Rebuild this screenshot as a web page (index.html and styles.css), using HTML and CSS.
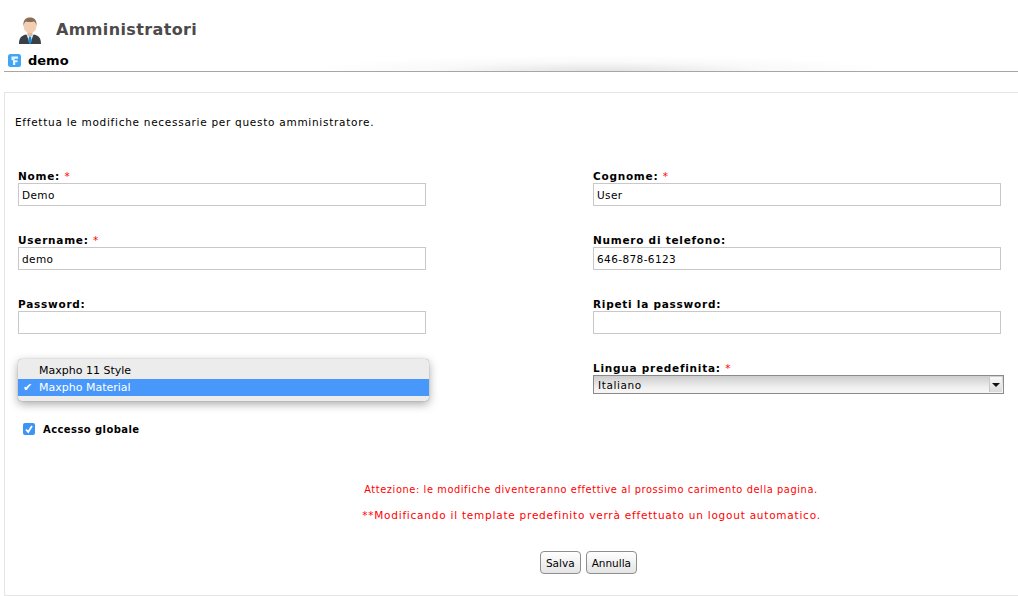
FILE: index.html
```html
<!DOCTYPE html>
<html lang="it">
<head>
<meta charset="utf-8">
<title>Amministratori</title>
<link rel="stylesheet" href="styles.css">
</head>
<body>
<header class="page-head">
  <svg class="admin-icon" width="24" height="27" viewBox="0 0 24 27">
    <path d="M1 27c0-6 2-8 7-9.500l4 2 4-2c5 1.500 7 3.500 7 9.500z" fill="#3b4047"/>
    <path d="M8.500 17.500h7L12 27z" fill="#eef2f5"/>
    <path d="M11 19.500h2l.8 5-1.800 2.500-1.800-2.500z" fill="#1c86d0"/>
    <rect x="9.500" y="13" width="5" height="6" fill="#e3b89a"/>
    <ellipse cx="12" cy="9" rx="6.500" ry="7.200" fill="#f1cdb2"/>
    <path d="M5.500 9C4.700 3 8 .5 12 .5s7.300 2.500 6.500 8.500c-.5-2.500-1.200-4-2.700-4.500-2.500.8-6 .8-7.600 0C6.700 5 6 6.500 5.500 9z" fill="#8a6d55"/>
  </svg>
  <h1 class="title">Amministratori</h1>
</header>
<div class="sub-head">
  <svg class="info-icon" width="13" height="13" viewBox="0 0 13 13">
    <rect width="13" height="13" rx="2.500" fill="#41a5f5"/>
    <path d="M3.500 2.500h6.500v2.200H6.500v1.600h3v2H7.200V11H5V6.300H3.500z" fill="#e8f5ff"/>
  </svg>
  <h2 class="record-name">demo</h2>
</div>

<main class="panel">
  <p class="intro">Effettua le modifiche necessarie per questo amministratore.</p>
  <form class="form-grid">
    <div class="field">
      <label class="field-label">Nome: <span class="req">*</span></label>
      <input class="text-input" type="text" value="Demo">
    </div>
    <div class="field">
      <label class="field-label">Cognome: <span class="req">*</span></label>
      <input class="text-input" type="text" value="User">
    </div>
    <div class="field">
      <label class="field-label">Username: <span class="req">*</span></label>
      <input class="text-input" type="text" value="demo">
    </div>
    <div class="field">
      <label class="field-label">Numero di telefono:</label>
      <input class="text-input" type="text" value="646-878-6123">
    </div>
    <div class="field">
      <label class="field-label">Password:</label>
      <input class="text-input" type="password">
    </div>
    <div class="field">
      <label class="field-label">Ripeti la password:</label>
      <input class="text-input" type="password">
    </div>
    <div class="field field-menu">
      <ul class="menu">
        <li class="menu-item">Maxpho 11 Style</li>
        <li class="menu-item menu-item-on"><span class="tick">✔</span>Maxpho Material</li>
      </ul>
    </div>
    <div class="field">
      <label class="field-label">Lingua predefinita: <span class="req">*</span></label>
      <div class="fake-select">
        <span class="fake-value">Italiano</span>
        <span class="fake-arrow"></span>
      </div>
    </div>
  </form>
  <div class="global-access">
    <span class="checkbox">
      <svg width="12" height="12" viewBox="0 0 12 12"><path d="M3 6.500l2.200 2.500L9 3" fill="none" stroke="#fff" stroke-width="1.800"/></svg>
    </span>
    <span class="check-label">Accesso globale</span>
  </div>
  <p class="warn warn-one">Attezione: le modifiche diventeranno effettive al prossimo carimento della pagina.</p>
  <p class="warn warn-two">**Modificando il template predefinito verrà effettuato un logout automatico.</p>
  <div class="actions">
    <button class="btn" type="button">Salva</button>
    <button class="btn" type="button">Annulla</button>
  </div>
</main>
</body>
</html>
```
FILE: styles.css
```css
* { box-sizing: border-box; }
html, body { height: 100%; }
body {
  margin: 0;
  overflow: hidden;
  background: #fff;
  color: #000;
  font-family: "DejaVu Sans", Verdana, sans-serif;
  font-size: 10.5px;
}
.page-head {
  display: flex;
  align-items: center;
  height: 43px;
  padding: 17px 0 0 18px;
}
.admin-icon { flex: none; }
.title {
  margin: 0 0 2px 14px;
  font-size: 16px;
  font-weight: bold;
  color: #4c4a4a;
  letter-spacing: 0.37px;
}
.sub-head {
  position: relative;
  display: flex;
  align-items: center;
  height: 29px;
  margin-left: 4px;
  padding: 7px 0 1px 4px;
  border-bottom: 1px solid #a6a6a6;
}
.sub-head::before {
  content: "";
  position: absolute;
  left: 296px;
  bottom: 0;
  width: 600px;
  height: 16px;
  background: radial-gradient(50% 100% at 50% 100%, rgba(0, 0, 0, .11), rgba(0, 0, 0, .025) 55%, rgba(0, 0, 0, 0));
}
.info-icon { flex: none; }
.record-name {
  margin: 0 0 0 7px;
  font-size: 13px;
  font-weight: bold;
}
.panel {
  height: 504px;
  margin: 20px 0 0 4px;
  padding: 0 0 0 10px;
  border: 1px solid #e5e5e5;
  border-right: 0;
}
.intro {
  margin: 22px 0 0;
  font-size: 10.500px;
  letter-spacing: 0.72px;
  line-height: 14px;
}
.form-grid {
  display: grid;
  grid-template-columns: 575px 408px;
  grid-auto-rows: 64px;
  margin: 40px 0 0 3px;
}
.field { display: flex; flex-direction: column; }
.field-label {
  height: 14px;
  font-weight: bold;
  font-size: 10.500px;
  line-height: 14px;
  letter-spacing: 0.75px;
}
.req { color: #f00; font-weight: normal; }
.text-input {
  width: 408px;
  height: 23px;
  padding: 0 3px;
  border: 1px solid #c8c8c8;
  border-radius: 0;
  outline: 0;
  background: #fff;
  font: 10.500px "DejaVu Sans", Verdana, sans-serif;
  letter-spacing: 0.4px;
  color: #000;
}
.field-menu { position: relative; }
.menu {
  position: absolute;
  top: -2px;
  left: 0;
  width: 411px;
  height: 42px;
  margin: 0;
  padding: 3px 0 4px;
  list-style: none;
  background: #ececec;
  border-radius: 4px;
  box-shadow: 0 3px 10px rgba(0, 0, 0, .35), 0 0 1px rgba(0, 0, 0, .4);
  font: 11px/17px "DejaVu Sans", Verdana, sans-serif;
}
.menu-item { position: relative; height: 17px; padding-left: 21px; }
.menu-item-on { background: #4898fb; color: #fff; }
.tick { position: absolute; left: 5px; top: 0; font-size: 11px; }
.fake-select {
  display: flex;
  align-items: center;
  justify-content: space-between;
  width: 411px;
  height: 19px;
  padding-left: 4px;
  border: 1px solid #8a8a8a;
  background: linear-gradient(#cdcdcd, #f1f1f1 70%, #f6f6f6);
}
.fake-value { font-size: 10.500px; letter-spacing: 0.6px; }
.fake-arrow {
  position: relative;
  width: 13px;
  height: 15px;
  margin-right: 1px;
  background: linear-gradient(#f8f8f8, #dadada);
  border-left: 1px solid #c8c8c8;
}
.fake-arrow::after {
  content: "";
  position: absolute;
  left: 2px;
  top: 6px;
  border-left: 4px solid transparent;
  border-right: 4px solid transparent;
  border-top: 4px solid #111;
}
.global-access {
  display: flex;
  align-items: center;
  margin: -3px 0 0 8px;
  height: 14px;
}
.checkbox {
  display: flex;
  width: 12px;
  height: 12px;
  border-radius: 2px;
  background: #3f93f5;
}
.check-label {
  margin-left: 8px;
  font-weight: bold;
  font-size: 10px;
  letter-spacing: 0.42px;
}
.warn {
  margin: 0;
  text-align: center;
  color: #f00;
  line-height: 14px;
}
.warn-one {
  margin-top: 47px;
  padding-left: 149px;
  font-size: 9.800px;
  letter-spacing: 0.6px;
}
.warn-two {
  margin-top: 11px;
  padding-left: 150px;
  font-size: 10.500px;
  letter-spacing: 0.77px;
}
.actions {
  display: flex;
  justify-content: center;
  gap: 5px;
  margin-top: 29px;
  padding-left: 144px;
}
.btn {
  height: 23px;
  padding: 0 5px;
  border: 1px solid #8e8e8e;
  border-radius: 4px;
  background: linear-gradient(#fff, #e4e4e4);
  font: 10.500px "DejaVu Sans", Verdana, sans-serif;
  color: #000;
}
```
